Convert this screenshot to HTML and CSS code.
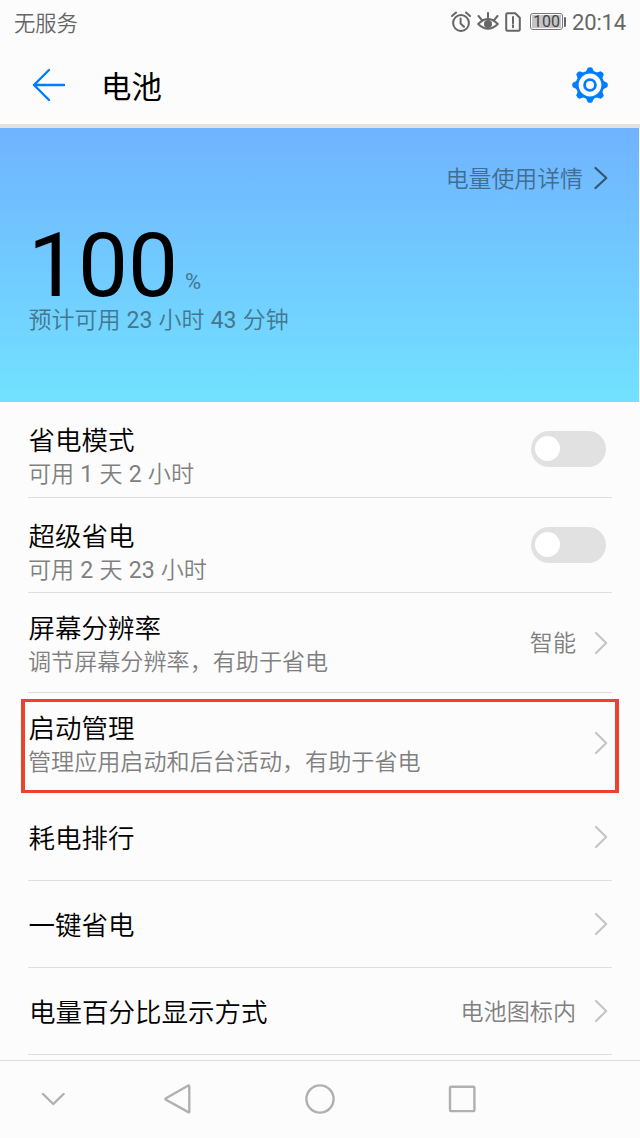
FILE: index.html
```html
<!DOCTYPE html>
<html lang="zh-CN">
<head>
<meta charset="utf-8">
<title>电池</title>
<link rel="stylesheet" href="styles.css">
</head>
<body>
<div class="screen">
  <div class="status">
    <span class="carrier">无服务</span>
    <div class="indicators">
      <svg class="ind-icon" width="20" height="22" viewBox="0 0 20 22">
        <circle cx="10" cy="12" r="7.9"/><path d="M9.6 7.5v5l3.4 3.2M1 5l4-3.4M19 5l-4-3.4"/>
      </svg>
      <svg class="ind-icon" width="22" height="20" viewBox="0 0 22 20">
        <path d="M1.2 12Q11 1.8 20.8 12Q11 21.6 1.2 12zM11 1v4.5M1.5 4l3 3.6M20.5 4l-3 3.6"/><circle class="pupil" cx="11" cy="12" r="4"/>
      </svg>
      <svg class="ind-icon sim" width="16" height="20" viewBox="0 0 16 20">
        <path d="M2.5 1.2h7.7l4.6 4.6v11.7q0 1.3-1.3 1.3h-11q-1.3 0-1.3-1.3v-15q0-1.3 1.3-1.3zM8 5v6.3M8 13.3v2"/>
      </svg>
      <div class="battery"><span class="battery-level">100</span></div>
      <span class="clock">20:14</span>
    </div>
  </div>
  <header class="appbar">
    <svg class="back" width="34" height="34" viewBox="0 0 34 34"><path d="M32 17H2M17 2L2 17l15 15"/></svg>
    <h1 class="page-title">电池</h1>
    <svg class="gear" width="36" height="36" viewBox="-18 -18 36 36">
      <g class="teeth">
        <path id="tooth" d="M-4.2-13L-2.2-17.2Q0-18.4 2.2-17.2L4.2-13z"/>
        <use href="#tooth" transform="rotate(45)"/><use href="#tooth" transform="rotate(90)"/><use href="#tooth" transform="rotate(135)"/><use href="#tooth" transform="rotate(180)"/><use href="#tooth" transform="rotate(225)"/><use href="#tooth" transform="rotate(270)"/><use href="#tooth" transform="rotate(315)"/>
      </g>
      <circle r="12.8"/><circle r="5.4"/>
    </svg>
  </header>
  <section class="hero">
    <div class="usage"><span class="usage-text">电量使用详情</span><svg class="chevron dark" width="14" height="24" viewBox="0 0 14 24"><path d="M1.5 2L12.3 12L1.5 22"/></svg></div>
    <div class="charge"><span class="charge-value">100</span><span class="charge-unit">%</span></div>
    <div class="estimate">预计可用 <span class="num">23</span> 小时 <span class="num">43</span> 分钟</div>
  </section>
  <main class="list">
    <div class="row saver">
      <div class="labels"><div class="label">省电模式</div><div class="hint">可用 <span class="num">1</span> 天 <span class="num">2</span> 小时</div></div>
      <div class="toggle"><div class="knob"></div></div>
    </div>
    <div class="row ultra">
      <div class="labels"><div class="label">超级省电</div><div class="hint">可用 <span class="num">2</span> 天 <span class="num">23</span> 小时</div></div>
      <div class="toggle"><div class="knob"></div></div>
    </div>
    <div class="row detail">
      <div class="labels"><div class="label">屏幕分辨率</div><div class="hint">调节屏幕分辨率，有助于省电</div></div>
      <span class="value">智能</span>
      <svg class="chevron" width="14" height="24" viewBox="0 0 14 24"><path d="M2 2L12.2 12L2 22"/></svg>
    </div>
    <div class="row detail highlighted">
      <div class="labels"><div class="label">启动管理</div><div class="hint">管理应用启动和后台活动，有助于省电</div></div>
      <svg class="chevron" width="14" height="24" viewBox="0 0 14 24"><path d="M2 2L12.2 12L2 22"/></svg>
      <div class="marker"></div>
    </div>
    <div class="row single">
      <div class="label">耗电排行</div>
      <svg class="chevron" width="14" height="24" viewBox="0 0 14 24"><path d="M2 2L12.2 12L2 22"/></svg>
    </div>
    <div class="row single">
      <div class="label">一键省电</div>
      <svg class="chevron" width="14" height="24" viewBox="0 0 14 24"><path d="M2 2L12.2 12L2 22"/></svg>
    </div>
    <div class="row single">
      <div class="label wide">电量百分比显示方式</div>
      <span class="value">电池图标内</span>
      <svg class="chevron" width="14" height="24" viewBox="0 0 14 24"><path d="M2 2L12.2 12L2 22"/></svg>
    </div>
  </main>
  <nav class="navbar">
    <svg class="nav-hide" width="24" height="30" viewBox="0 0 24 30"><path d="M2 10l10.3 10L22.6 10"/></svg>
    <svg class="nav-back" width="27" height="30" viewBox="0 0 27 30"><path d="M24.3 1.5q1 0 1 1v25q0 1-1 .6L2 15.8q-1-.8 0-1.6z"/></svg>
    <svg class="nav-home" width="30" height="30" viewBox="0 0 30 30"><circle cx="15" cy="15" r="13.6"/></svg>
    <svg width="28" height="30" viewBox="0 0 28 30"><rect x="2" y="2.7" width="24.4" height="24.4" rx="1"/></svg>
  </nav>
</div>
</body>
</html>
```
FILE: styles.css
```css
* { box-sizing: border-box; }
body {
  margin: 0;
  background: #fcfcfc;
  font-family: Roboto, "Noto Sans CJK SC", sans-serif;
  font-weight: 350;
  color: #000;
  white-space: nowrap;
}
svg { display: block; flex: none; fill: none; stroke-linecap: round; stroke-linejoin: round; }
.num { font-weight: 400; }
.screen { width: 640px; height: 1138px; display: flex; flex-direction: column; overflow: hidden; }

.status { height: 46px; padding: 0 14px; display: flex; justify-content: space-between; align-items: center; color: #666; }
.carrier { font-size: 21.3px; line-height: 30px; margin-top: 1px; }
.indicators { display: flex; align-items: center; }
.ind-icon { stroke: #666; stroke-width: 2; margin: 0 6px 2px 0; }
.sim { margin-right: 9px; }
.pupil { fill: #666; stroke: none; }
.battery {
  position: relative;
  width: 33px; height: 17px; margin: 0 9px 3px 0; padding: 1px;
  border: 1px solid #777; border-radius: 3px;
}
.battery::after { content: ""; position: absolute; right: -4px; top: 3px; width: 2px; height: 10px; border-radius: 1px; background: #666; }
.battery-level { display: block; height: 13px; background: #c5c5c5; font-size: 16px; line-height: 14px; text-align: center; font-weight: 400; color: #444; }
.clock { font-size: 22px; font-weight: 400; line-height: 30px; letter-spacing: -0.15px; margin-top: -1px; }

.appbar { height: 82px; padding: 0 32px; display: flex; align-items: center; border-bottom: 4px solid #e4e1e1; }
.back { stroke: #007dff; stroke-width: 2.4; }
.page-title { margin: 5px 0 0 35px; flex: 1; font-size: 30.4px; line-height: 40px; font-weight: 400; }
.gear { stroke: #007dff; stroke-width: 2.8; }
.teeth { fill: #007dff; stroke: none; }

.hero { height: 274px; margin-right: 1px; padding: 31px 31px 0 28px; background: linear-gradient(#70b3ff, #72e1ff); }
.usage { display: flex; justify-content: flex-end; align-items: center; height: 37px; gap: 11px; font-size: 22.9px; color: #416d90; }
.usage-text { line-height: 30px; margin-top: 4px; }
.chevron { stroke: #c5c5c5; stroke-width: 2.2; }
.chevron.dark { stroke: #34556f; }
.charge { height: 84px; margin-top: 24px; display: flex; align-items: flex-end; }
.charge-value { font-size: 89px; line-height: 88px; font-weight: 400; margin: 0 0 -6px 0; }
.charge-unit { font-size: 22px; line-height: 26px; margin: 0 0 9px 7px; color: #42768c; font-weight: 400; }
.estimate { font-size: 23px; line-height: 34px; word-spacing: 0.5px; padding-left: 0.5px; color: #43778d; }

.list { padding: 0 28px; height: 658px; }
.row { position: relative; display: flex; align-items: center; border-bottom: 1px solid #dedede; padding-right: 4px; }
.labels { flex: 1; align-self: flex-start; }
.label { flex: 1; font-size: 26.5px; line-height: 34px; padding-left: 0.5px; }
.label.wide { padding-left: 1px; }
.hint, .value { font-size: 23.1px; line-height: 34px; word-spacing: 0.5px; color: #808080; }
.value { margin: 3px 18px 0 0; }
.saver { height: 96px; padding-right: 6px; }
.ultra { height: 95px; padding-right: 6px; }
.saver .labels, .ultra .labels { padding-top: 22px; }
.detail { height: 100px; }
.detail .labels { padding-top: 19px; }
.highlighted { height: 101px; border-bottom-color: transparent; }
.marker { position: absolute; left: -7px; right: -7px; top: 6px; bottom: 0; border: 4px solid #ec412b; border-width: 3px 4px; }
.single { height: 87px; }
.single .label { margin-top: 3px; }
.toggle { width: 75px; height: 36px; margin-bottom: 1px; padding: 5px 4px; border-radius: 18px; background: #e1e1e1; }
.knob { width: 25px; height: 25px; border-radius: 50%; background: #fff; }

.navbar { height: 78px; border-top: 1px solid #dedede; padding: 0 0 2px 41px; display: flex; align-items: center; }
.navbar svg { stroke: #b0b0b0; stroke-width: 2.4; }
.nav-hide { margin-right: 99px; }
.nav-back { margin-right: 114px; }
.nav-home { margin-right: 113px; }
```
